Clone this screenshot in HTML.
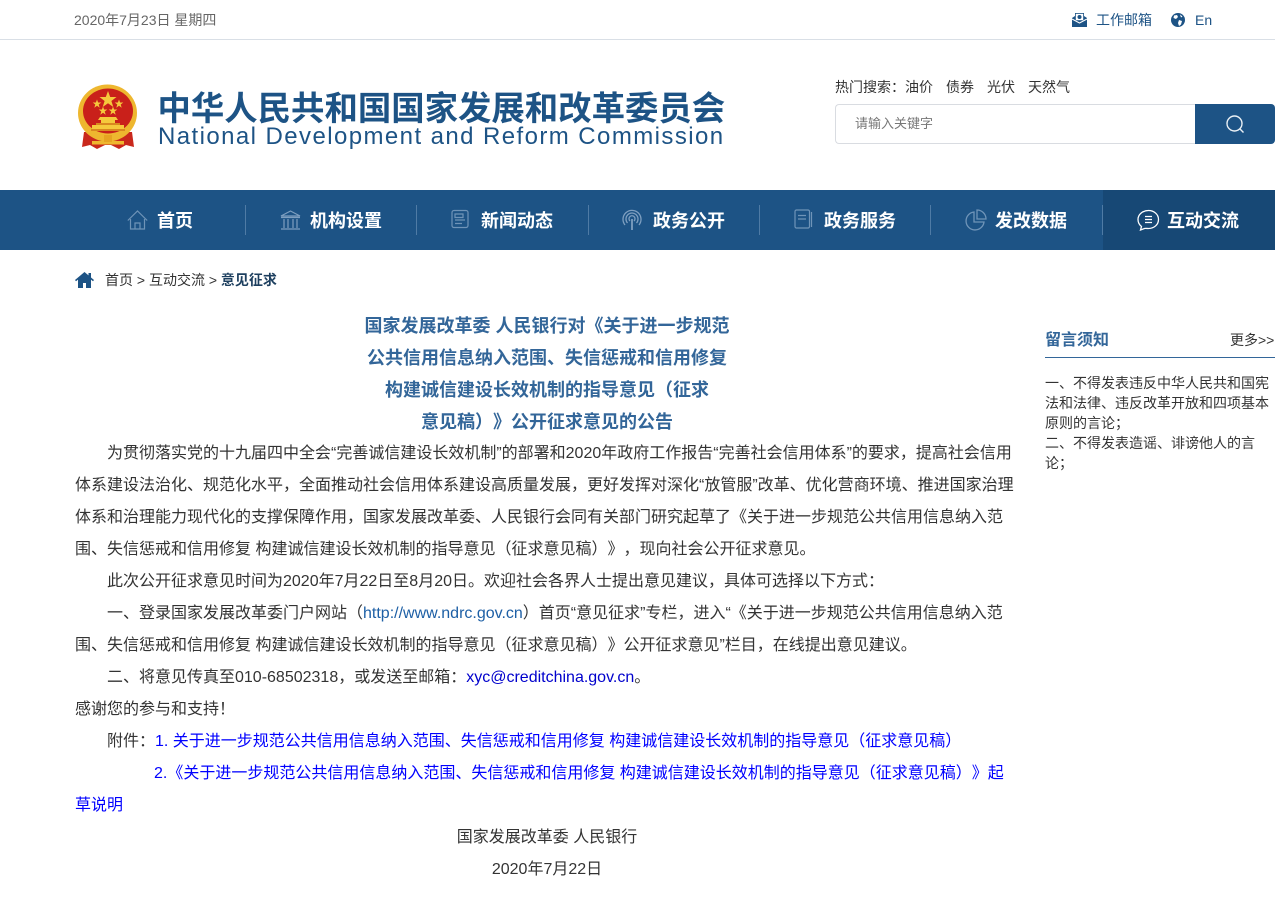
<!DOCTYPE html>
<html lang="zh-CN">
<head>
<meta charset="utf-8">
<title>国家发展改革委</title>
<style>
html,body{margin:0;padding:0;background:#fff}
body{width:1275px;height:903px;position:relative;overflow:hidden;font-family:"Liberation Sans","Noto Sans CJK SC",sans-serif;color:#333;text-spacing-trim:space-all}
.a{position:absolute;white-space:nowrap}
.l{position:absolute;left:75px;font-size:16px;line-height:32px;height:32px;white-space:nowrap;color:#333}
.t{position:absolute;left:75px;width:944px;text-align:center;font-size:18px;font-weight:bold;line-height:32px;color:#336699;white-space:nowrap}
.l a,.link{color:#0000ff;text-decoration:none}
.n{position:absolute;top:209px;font-size:18px;font-weight:bold;line-height:24px;color:#fff;white-space:nowrap}
.s{position:absolute;top:205px;width:1px;height:30px;background:#4f7ba5}
.i{position:absolute;top:209px}
.r{position:absolute;left:1045px;font-size:14px;line-height:19.5px;color:#333;white-space:nowrap}
</style>
</head>
<body>
<!-- top bar -->
<div class="a" style="left:74px;top:10px;font-size:14px;line-height:20px;color:#666">2020年7月23日 星期四</div>
<svg class="a" style="left:1072px;top:12px" width="15" height="16" viewBox="0 0 15 16"><path d="M0 6 3 4V1h9v3l3 2v9H0z" fill="#1d5385"/><rect x="3.500" y="1.500" width="8" height="7" fill="#fff" stroke="#1d5385" stroke-width=".6"/><circle cx="7.500" cy="5" r="2" fill="#1d5385"/><path d="M0 7l7.500 4L15 7" fill="none" stroke="#fff" stroke-width="1"/></svg>
<div class="a" style="left:1096px;top:10px;font-size:14px;line-height:20px;color:#1d5385">工作邮箱</div>
<svg class="a" style="left:1171px;top:13px" width="14" height="14" viewBox="0 0 14 14"><circle cx="7" cy="7" r="7" fill="#1d5385"/><path d="M3 2.500 6 2 7 4 5 6 2.500 5zM8 7l3 1-1 3.500-2 1.500-1-3zM9 1.500l2.500 2L10 4.500z" fill="#fff"/></svg>
<div class="a" style="left:1195px;top:10px;font-size:14px;line-height:20px;color:#1d5385">En</div>
<div class="a" style="left:0;top:39px;width:1275px;height:1px;background:#d9dfe6"></div>

<!-- emblem -->
<svg class="a" style="left:74px;top:82px" width="66" height="70" viewBox="0 0 66 70">
<path d="M10 50 8 65 16 63 23 67 31 63H37L45 67 52 63 60 65 58 50z" fill="#c9281c"/>
<ellipse cx="33.500" cy="31" rx="29.500" ry="28.500" fill="#eeb72f"/>
<ellipse cx="34" cy="29" rx="25" ry="22.500" fill="#c9201a"/>
<g fill="#f5c93c">
<polygon points="34,9 36.200,15 42.500,15 37.400,19 39.300,25 34,21.300 28.700,25 30.600,19 25.500,15 31.800,15"/>
<polygon points="23,17.500 24.100,20.500 27.300,20.500 24.700,22.500 25.700,25.700 23,23.800 20.300,25.700 21.300,22.500 18.700,20.500 21.900,20.500"/>
<polygon points="45,17.500 46.100,20.500 49.300,20.500 46.700,22.500 47.700,25.700 45,23.800 42.300,25.700 43.300,22.500 40.700,20.500 43.900,20.500"/>
<polygon points="29,24.500 30.100,27.500 33.300,27.500 30.700,29.500 31.700,32.700 29,30.800 26.300,32.700 27.300,29.500 24.700,27.500 27.900,27.500"/>
<polygon points="39,24.500 40.100,27.500 43.300,27.500 40.700,29.500 41.700,32.700 39,30.800 36.300,32.700 37.300,29.500 34.700,27.500 37.900,27.500"/>
<path d="M26 35h16l2 3h-3v3h5v2h4v4H18v-4h4v-2h5v-3h-3z"/>
</g>
<path d="M22 41h24v2H22z" fill="#d9881f"/>
<rect x="17" y="47" width="34" height="2" fill="#d9881f"/>
<rect x="18" y="59" width="32" height="3.500" fill="#eeb72f"/>
<rect x="30" y="53" width="8" height="7" fill="#e6a321"/>
</svg>

<!-- logo text -->
<div class="a" style="left:157.500px;top:84px;font-size:33.400px;line-height:44px;font-weight:bold;color:#1d5385;font-family:'Noto Sans CJK SC','Liberation Sans',sans-serif">中华人民共和国国家发展和改革委员会</div>
<div class="a" style="left:158px;top:122px;font-size:24px;line-height:30px;letter-spacing:1.420px;color:#1d5385">National Development and Reform Commission</div>

<!-- search -->
<div class="a" style="left:835px;top:78px;font-size:14px;line-height:19px;color:#333">热门搜索：油价<span style="margin-left:13px">债券</span><span style="margin-left:13px">光伏</span><span style="margin-left:13px">天然气</span></div>
<div class="a" style="left:835px;top:104px;width:360px;height:40px;box-sizing:border-box;border:1px solid #d9dce1;border-right:0;border-radius:4px 0 0 4px;background:#fff"></div>
<div class="a" style="left:855px;top:114px;font-size:13px;line-height:19px;color:#777">请输入关键字</div>
<div class="a" style="left:1195px;top:104px;width:80px;height:40px;background:#1d5385;border-radius:0 4px 4px 0"></div>
<svg class="a" style="left:1225px;top:114px" width="20" height="20" viewBox="0 0 20 20" fill="none" stroke="#eaf0f5" stroke-width="1.400"><circle cx="9.500" cy="9.500" r="7.500"/><path d="M15 15l3.500 3.500"/></svg>

<!-- nav -->
<div class="a" style="left:0;top:190px;width:1275px;height:60px;background:#1d5385"></div>
<div class="a" style="left:1103px;top:190px;width:172px;height:60px;background:#174875"></div>
<div class="s" style="left:245px"></div><div class="s" style="left:416px"></div><div class="s" style="left:588px"></div><div class="s" style="left:759px"></div><div class="s" style="left:930px"></div><div class="s" style="left:1102px"></div>

<svg class="i" style="left:127px" width="21" height="22" viewBox="0 0 21 22" fill="none" stroke="#6f94b8" stroke-width="1.200"><path d="M.8 11.500 10.500 2l9.700 9.500M3.500 10v10h14V10M8 20v-6h5v6"/></svg>
<div class="n" style="left:157px">首页</div>
<svg class="i" style="left:280px" width="21" height="22" viewBox="0 0 21 22" fill="none" stroke="#7e9fc0" stroke-width="1.200"><path d="M1 7 10.500 2 20 7zM1 8.500h19M4 10v9M8 10v9M13 10v9M17 10v9M1 20h19"/></svg>
<div class="n" style="left:310px">机构设置</div>
<svg class="i" style="left:451px" width="18" height="20" viewBox="0 0 18 20" fill="none" stroke="#6f94b8" stroke-width="1.200"><rect x="1" y="1.500" width="16" height="17" rx="2"/><path d="M4 5h8v3.500H4zM4 11h10M4 14.500h7"/></svg>
<div class="n" style="left:481px">新闻动态</div>
<svg class="i" style="left:622px" width="20" height="24" viewBox="0 0 20 24" fill="none" stroke="#7e9fc0" stroke-width="1.300"><path d="M3 16a9 9 0 1 1 14 0M5.500 14a6 6 0 1 1 9 0M8 12a3 3 0 1 1 4 0"/><path d="M10 10v11" stroke-width="1.800"/></svg>
<div class="n" style="left:653px">政务公开</div>
<svg class="i" style="left:794px" width="19" height="20" viewBox="0 0 19 20" fill="none" stroke="#6f94b8" stroke-width="1.200"><rect x="1" y="1" width="14.500" height="18" rx="1.500"/><path d="M4 6.500h8M4 10h8M17.500 3v15"/></svg>
<div class="n" style="left:824px">政务服务</div>
<svg class="i" style="left:965px" width="22" height="22" viewBox="0 0 22 22" fill="none" stroke="#6f94b8" stroke-width="1.300"><path d="M9 3a9 9 0 1 0 10 10H9z"/><path d="M12 1v9h9a9 9 0 0 0-9-9z"/></svg>
<div class="n" style="left:995px">发改数据</div>
<svg class="i" style="left:1137px" width="23" height="22" viewBox="0 0 23 22" fill="none" stroke="#fff" stroke-width="1.300"><path d="M11.500 1.500c5.500 0 10 3.800 10 9s-4.500 9-10 9c-1.500 0-3-.3-4 0l-4 1.500 1-3.500C2.500 16 1 13.500 1 10.500c0-5.200 5-9 10.500-9z"/><path d="M8 7.500h7M8 10.500h7M8 13.500h7"/></svg>
<div class="n" style="left:1167px">互动交流</div>

<!-- breadcrumb -->
<svg class="a" style="left:75px;top:272px" width="19" height="16" viewBox="0 0 19 16"><path d="M9.500 0 0 8l1 1.200L3 7.600V16h5v-5h3v5h5V7.600l2 1.600L19 8l-3-2.500V1h-2.500v2.400z" fill="#1d5385"/></svg>
<div class="a" style="left:105px;top:270px;font-size:14px;line-height:20px;color:#333">首页 &gt; 互动交流 &gt; <span style="color:#1d3f5f;font-weight:bold">意见征求</span></div>

<!-- title -->
<div class="t" style="top:310px">国家发展改革委 人民银行对《关于进一步规范</div>
<div class="t" style="top:342px">公共信用信息纳入范围、失信惩戒和信用修复</div>
<div class="t" style="top:374px">构建诚信建设长效机制的指导意见（征求</div>
<div class="t" style="top:406px">意见稿）》公开征求意见的公告</div>

<!-- body -->
<div class="l" style="top:438px;left:107px">为贯彻落实党的十九届四中全会“完善诚信建设长效机制”的部署和2020年政府工作报告“完善社会信用体系”的要求，提高社会信用</div>
<div class="l" style="top:470px">体系建设法治化、规范化水平，全面推动社会信用体系建设高质量发展，更好发挥对深化“放管服”改革、优化营商环境、推进国家治理</div>
<div class="l" style="top:502px">体系和治理能力现代化的支撑保障作用，国家发展改革委、人民银行会同有关部门研究起草了《关于进一步规范公共信用信息纳入范</div>
<div class="l" style="top:534px">围、失信惩戒和信用修复 构建诚信建设长效机制的指导意见（征求意见稿）》，现向社会公开征求意见。</div>
<div class="l" style="top:566px;left:107px">此次公开征求意见时间为2020年7月22日至8月20日。欢迎社会各界人士提出意见建议，具体可选择以下方式：</div>
<div class="l" style="top:598px;left:107px">一、登录国家发展改革委门户网站（<a href="#" style="color:#1d5fa5">http://www.ndrc.gov.cn</a>）首页“意见征求”专栏，进入“《关于进一步规范公共信用信息纳入范</div>
<div class="l" style="top:630px">围、失信惩戒和信用修复 构建诚信建设长效机制的指导意见（征求意见稿）》公开征求意见”栏目，在线提出意见建议。</div>
<div class="l" style="top:662px;left:107px">二、将意见传真至010-68502318，或发送至邮箱：<a href="#" style="color:#0000cc">xyc@creditchina.gov.cn</a>。</div>
<div class="l" style="top:694px">感谢您的参与和支持！</div>
<div class="l" style="top:726px;left:107px">附件：<a href="#">1. 关于进一步规范公共信用信息纳入范围、失信惩戒和信用修复 构建诚信建设长效机制的指导意见（征求意见稿）</a></div>
<div class="l" style="top:758px;left:154px"><a href="#">2.《关于进一步规范公共信用信息纳入范围、失信惩戒和信用修复 构建诚信建设长效机制的指导意见（征求意见稿）》起</a></div>
<div class="l" style="top:790px"><a href="#">草说明</a></div>
<div class="l" style="top:822px;left:75px;width:944px;text-align:center">国家发展改革委 人民银行</div>
<div class="l" style="top:854px;left:75px;width:944px;text-align:center">2020年7月22日</div>

<!-- sidebar -->
<div class="a" style="left:1045px;top:330px;font-size:16px;line-height:22px;font-weight:bold;color:#336699">留言须知</div>
<div class="a" style="left:1230px;top:331px;font-size:14px;line-height:18px;color:#333">更多&gt;&gt;</div>
<div class="a" style="left:1045px;top:357px;width:230px;height:1px;background:#336699"></div>
<div class="r" style="top:374px">一、不得发表违反中华人民共和国宪</div>
<div class="r" style="top:394px">法和法律、违反改革开放和四项基本</div>
<div class="r" style="top:414px">原则的言论；</div>
<div class="r" style="top:434px">二、不得发表造谣、诽谤他人的言</div>
<div class="r" style="top:454px">论；</div>
</body>
</html>
